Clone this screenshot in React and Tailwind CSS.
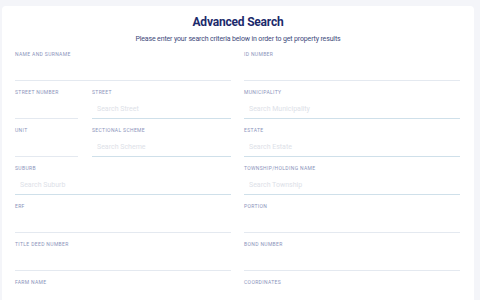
const rows = [
    [
        [{ label: 'Name and Surname', span: 'full' }],
        [{ label: 'ID Number', span: 'full' }],
    ],
    [
        [
            { label: 'Street Number', w: 'w-[63px]' },
            { label: 'Street', placeholder: 'Search Street', grow: true },
        ],
        [{ label: 'Municipality', placeholder: 'Search Municipality', span: 'full' }],
    ],
    [
        [
            { label: 'Unit', w: 'w-[63px]' },
            { label: 'Sectional Scheme', placeholder: 'Search Scheme', grow: true },
        ],
        [{ label: 'Estate', placeholder: 'Search Estate', span: 'full' }],
    ],
    [
        [{ label: 'Suburb', placeholder: 'Search Suburb', span: 'full' }],
        [{ label: 'Township/Holding Name', placeholder: 'Search Township', span: 'full' }],
    ],
    [
        [{ label: 'ERF', span: 'full' }],
        [{ label: 'Portion', span: 'full' }],
    ],
    [
        [{ label: 'Title Deed Number', span: 'full' }],
        [{ label: 'Bond Number', span: 'full' }],
    ],
    [
        [{ label: 'Farm Name', span: 'full' }],
        [{ label: 'Coordinates', span: 'full' }],
    ],
];

const Field = ({ label, placeholder, w, grow }) => (
    <div className={`flex flex-col ${grow ? 'flex-1' : ''} ${w || ''} ${!w && !grow ? 'w-full' : ''}`}>
        <label className="h-[8px] text-[5px] leading-[8px] tracking-[0.35px] uppercase text-[#8b94bb]">
            {label}
        </label>
        <input
            placeholder={placeholder}
            className={`h-[23px] px-[5px] pt-[4px] text-[7px] outline-none bg-transparent border-b placeholder:text-[#dde1e8] ${
                placeholder ? 'border-[#cfe0ea]' : 'border-[#e4e9f0]'
            }`}
        />
    </div>
);

export default function App() {
    return (
        <div className="bg-[#f4f5f9] pt-[6px] pl-[2px] font-['Roboto',sans-serif] overflow-hidden h-[300px]">
            <div className="w-[472px] bg-white rounded-[4px] pt-[8px] px-[13px] pb-4">
                <h1 className="text-center text-[12px] leading-[16px] font-bold text-[#1c2a6b] tracking-[-0.2px]">
                    Advanced Search
                </h1>
                <p className="text-center text-[7px] leading-[10px] mt-[4px] text-[#3d4a7a] tracking-[-0.15px]">
                    Please enter your search criteria below in order to get property results
                </p>
                <div className="mt-[6px] flex flex-col gap-y-[7px] pr-px">
                    {rows.map((row, i) => (
                        <div key={i} className="grid grid-cols-2 gap-x-[13px]">
                            {row.map((col, j) => (
                                <div key={j} className="flex gap-x-[14px]">
                                    {col.map((f) => (
                                        <Field key={f.label} {...f} />
                                    ))}
                                </div>
                            ))}
                        </div>
                    ))}
                </div>
            </div>
        </div>
    );
}
